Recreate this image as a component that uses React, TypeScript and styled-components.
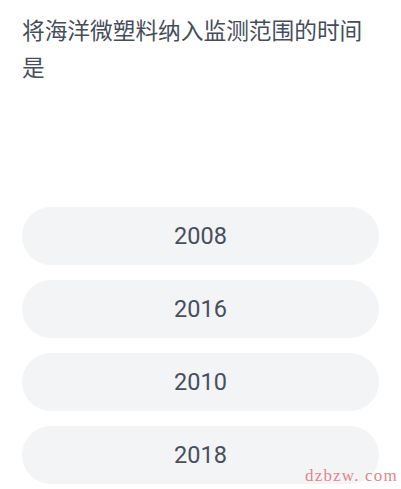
import React from "react";
import styled, { createGlobalStyle } from "styled-components";

const Global = createGlobalStyle`
  html, body { margin: 0; padding: 0; background: #ffffff; }
  body { width: 401px; height: 489px; overflow: hidden; }
`;

const Page = styled.div`
  position: relative;
  width: 401px;
  height: 489px;
  background: #ffffff;
  padding: 11px 22px 0 22px;
  box-sizing: border-box;
  display: flex;
  flex-direction: column;
  font-family: "Noto Sans CJK SC", "Noto Sans", sans-serif;
`;

const Title = styled.div`
  width: 350px;
  font-size: 22.7px;
  line-height: 37px;
  color: #454d5b;
  font-weight: 400;
`;

const Options = styled.div`
  margin-top: 122px;
  display: flex;
  flex-direction: column;
  gap: 15px;
`;

const Option = styled.div`
  height: 58px;
  width: 357px;
  border-radius: 29px;
  background: #f3f4f6;
  display: flex;
  align-items: center;
  justify-content: center;
  font-family: Roboto, "Noto Sans", sans-serif;
  font-size: 23.5px;
  font-weight: 400;
  color: #484f5c;
`;

const Watermark = styled.div`
  position: absolute;
  right: 3px;
  bottom: 3px;
  font-family: "Liberation Serif", "DejaVu Serif", serif;
  font-size: 17px;
  color: #e2868c;
  letter-spacing: 1.2px;
`;

const years = ["2008", "2016", "2010", "2018"];

export default function App() {
  return (
    <>
      <Global />
      <Page>
        <Title>将海洋微塑料纳入监测范围的时间是</Title>
        <Options>
          {years.map((y) => (
            <Option key={y}>{y}</Option>
          ))}
        </Options>
        <Watermark>dzbzw. com</Watermark>
      </Page>
    </>
  );
}
